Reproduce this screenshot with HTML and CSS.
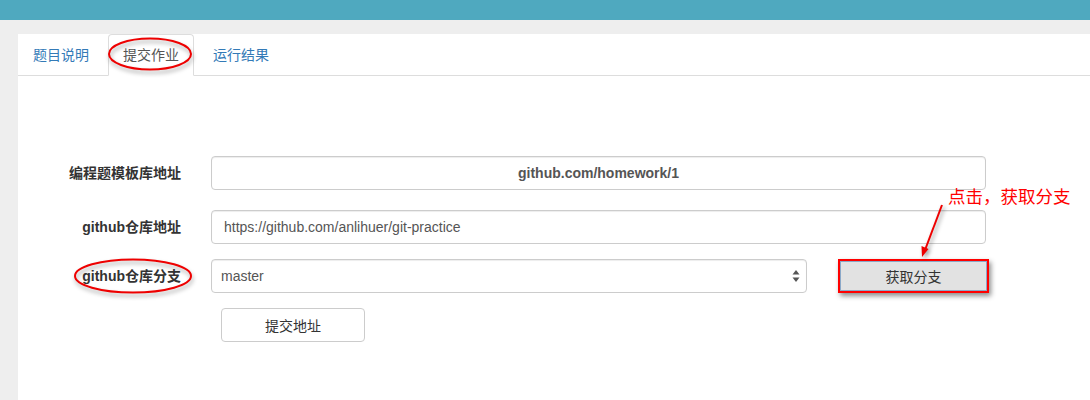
FILE: index.html
```html
<!DOCTYPE html>
<html lang="zh">
<head>
<meta charset="utf-8">
<title>提交作业</title>
<link rel="stylesheet" href="styles.css">
</head>
<body>
<div class="topbar"></div>
<div class="page">
  <div class="panel">
    <ul class="tabs">
      <li class="tab"><a>题目说明</a></li>
      <li class="tab active"><a>提交作业</a></li>
      <li class="tab"><a>运行结果</a></li>
    </ul>
    <div class="form">
      <div class="row row-first">
        <label class="label">编程题模板库地址</label>
        <div class="input input-wide input-center">github.com/homework/1</div>
      </div>
      <div class="row row-second">
        <label class="label">github仓库地址</label>
        <div class="input input-wide">https://github.com/anlihuer/git-practice</div>
      </div>
      <div class="row">
        <label class="label">github仓库分支</label>
        <div class="input select">
          <span>master</span>
          <svg class="select-arrows" width="8" height="14" viewBox="0 0 8 14"><path d="M4 1 L7.5 5.5 L0.5 5.5 Z" fill="#555"/><path d="M4 13 L7.5 8.5 L0.5 8.5 Z" fill="#555"/></svg>
        </div>
        <button class="btn btn-fetch" type="button">获取分支</button>
      </div>
      <div class="row row-submit">
        <button class="btn btn-submit" type="button">提交地址</button>
      </div>
    </div>

    <svg class="ellipse ellipse-tab" width="88" height="37" viewBox="0 0 88 37"><ellipse cx="43" cy="17" rx="41" ry="15.5" fill="none" stroke="#ee0000" stroke-width="2"/></svg>
    <svg class="ellipse ellipse-label" width="122" height="39" viewBox="0 0 122 39"><ellipse cx="60" cy="18" rx="58" ry="16.5" fill="none" stroke="#ee0000" stroke-width="2"/></svg>
    <div class="note">点击，获取分支</div>
    <svg class="arrow" width="30" height="60" viewBox="0 0 30 60"><line x1="23" y1="3" x2="6" y2="48" stroke="#ee0000" stroke-width="2"/><path d="M3 55 L2.5 44 L9.5 47 Z" fill="#ee0000"/></svg>
  </div>
</div>
</body>
</html>
```
FILE: styles.css
```css
* { box-sizing: border-box; }
html, body { margin: 0; padding: 0; }
body {
  background: #eeeeee;
  font-family: "Liberation Sans", "Noto Sans CJK SC", Arial, sans-serif;
  font-size: 14px;
  color: #333;
  width: 1090px;
  height: 400px;
  overflow: hidden;
}
.topbar {
  height: 20px;
  background: #4fa9bf;
}
.page {
  padding: 14px 0 0 18px;
}
.panel {
  position: relative;
  background: #fff;
  height: 366px;
}
.tabs {
  list-style: none;
  margin: 0;
  padding: 0;
  display: flex;
  height: 42px;
  border-bottom: 1px solid #dddddd;
}
.tab {
  margin-right: 3px;
  margin-bottom: -1px;
}
.tab a {
  display: block;
  padding: 10px 15px;
  line-height: 20px;
  color: #337ab7;
  border: 1px solid transparent;
  border-radius: 4px 4px 0 0;
  font-size: 14px;
}
.tab:first-child a { border-left: 0; }
.tab.active a {
  color: #555;
  background: #fff;
  border-color: #dddddd;
  border-bottom-color: #fff;
  height: 42px;
  padding: 10px 14px;
}
.form {
  margin-top: 80px;
}
.row {
  display: flex;
  align-items: center;
  gap: 30px;
  height: 34px;
  margin-top: 15px;
}
.row-first { margin-top: 0; }
.row-second { margin-top: 20px; }
.label {
  width: 163px;
  text-align: right;
  font-weight: bold;
  color: #333;
  line-height: 34px;
}
.input {
  height: 34px;
  border: 1px solid #cccccc;
  border-radius: 4px;
  box-shadow: inset 0 1px 1px rgba(0,0,0,.075);
  padding: 0 12px;
  line-height: 32px;
  color: #555;
  background: #fff;
  white-space: nowrap;
}
.input-wide { width: 775px; }
.input-center { text-align: center; font-weight: bold; }
.select {
  width: 596px;
  display: flex;
  justify-content: space-between;
  align-items: center;
  padding: 0 6px 0 9px;
}
.select-arrows { display: block; }
.btn {
  font-family: "Liberation Sans", "Noto Sans CJK SC", Arial, sans-serif;
  font-size: 14px;
  color: #333;
  height: 34px;
  cursor: pointer;
}
.btn-fetch {
  width: 151px;
  margin-left: 1px;
  background: #e2e2e2;
  border: 2px solid #ff0000;
  border-radius: 0;
  box-shadow: inset 0 0 0 1px #8aa8c8, 2px 3px 5px rgba(0,0,0,.45);
}
.row-submit {
  padding-left: 203px;
}
.btn-submit {
  width: 144px;
  background: #fff;
  border: 1px solid #cccccc;
  border-radius: 4px;
}
.ellipse {
  position: absolute;
  filter: drop-shadow(1px 3px 2px rgba(0,0,0,.35));
}
.ellipse-tab { left: 89px; top: 3px; }
.ellipse-label { left: 55px; top: 224px; }
.note {
  position: absolute;
  left: 930px;
  top: 151px;
  color: #ff0000;
  font-size: 17.5px;
  line-height: 24px;
  white-space: nowrap;
}
.arrow {
  position: absolute;
  left: 901px;
  top: 168px;
  filter: drop-shadow(2px 2px 2px rgba(0,0,0,.4));
}
```
